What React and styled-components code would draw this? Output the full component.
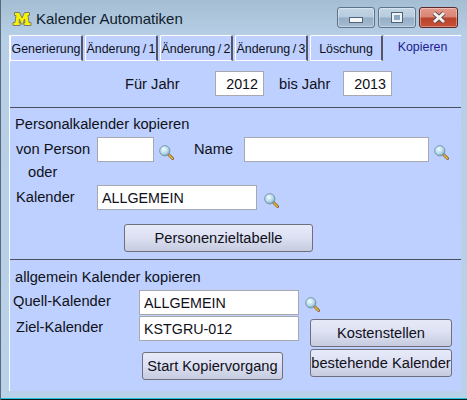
import React from "react";
import styled, { createGlobalStyle } from "styled-components";

const Global = createGlobalStyle`
  html, body {
    margin: 0;
    padding: 0;
    background: #b9d2ea;
  }
  * {
    box-sizing: border-box;
  }
`;

function Lens() {
  return (
    <IconBox>
      <svg width="15" height="15" viewBox="0 0 15 15">
        <defs>
          <radialGradient id="lens" cx="0.4" cy="0.35" r="0.7">
            <stop offset="0" stopColor="#f4fcff" />
            <stop offset="0.6" stopColor="#b4d8e8" />
            <stop offset="1" stopColor="#6c9db6" />
          </radialGradient>
        </defs>
        <path d="M9.5 9.5 L13.6 13.6" stroke="#80601f" strokeWidth="2.8" strokeLinecap="round" />
        <path d="M10 10 L13.4 13.4" stroke="#f0b93a" strokeWidth="1.4" strokeLinecap="round" />
        <circle cx="5.8" cy="5.8" r="5.1" fill="url(#lens)" stroke="#7896a8" strokeWidth="1" />
      </svg>
    </IconBox>
  );
}

function Logo() {
  return (
    <svg width="20" height="14" viewBox="0 0 20 14">
      <path d="M1 13.5 V10.5 H3 L4 3.5 H2.5 V0.5 H7.5 L10 6 L12.5 0.5 H17.5 V3.5 H16 L17 10.5 H19 V13.5 H12 V10.5 H13 L12.6 7 L10.8 12 H9.2 L7.4 7 L7 10.5 H8 V13.5 Z" fill="#f8f400" stroke="#7c7d72" strokeWidth="1" />
    </svg>
  );
}

export default function App() {
  return (
    <>
      <Global />
      <Win>
        <TitleBar>
          <Logo />
          <Title>Kalender Automatiken</Title>
          <Caption>
            <CapButton>
              <MinGlyph />
            </CapButton>
            <CapButton>
              <MaxGlyph />
            </CapButton>
            <CapButton $close>
              <svg width="18" height="13" viewBox="0 0 18 13">
                <path d="M4 2 L14 11 M14 2 L4 11" stroke="#5c4a48" strokeWidth="4.6" />
                <path d="M4 2 L14 11 M14 2 L4 11" stroke="#f4f1ef" strokeWidth="3" />
              </svg>
            </CapButton>
          </Caption>
        </TitleBar>
        <Client>
          <Tabs>
            <Tab>Generierung</Tab>
            <Tab>Änderung / 1</Tab>
            <Tab>Änderung / 2</Tab>
            <Tab>Änderung / 3</Tab>
            <Tab>Löschung</Tab>
            <ActiveTab>Kopieren</ActiveTab>
          </Tabs>
          <YearSection>
            <YearLabel $w={90}>Für Jahr</YearLabel>
            <YearInput readOnly value="2012" />
            <YearLabel $w={64} $left={15}>bis Jahr</YearLabel>
            <YearInput readOnly value="2013" />
          </YearSection>
          <PersonSection>
            <Heading>Personalkalender kopieren</Heading>
            <Row>
              <Label>von Person</Label>
              <Input $w={57} readOnly />
              <Lens />
              <NameLabel>Name</NameLabel>
              <Input $w={185} readOnly />
              <Lens />
            </Row>
            <OrLabel>oder</OrLabel>
            <Row>
              <Label>Kalender</Label>
              <Input $w={160} readOnly value="ALLGEMEIN" />
              <WideLens>
                <Lens />
              </WideLens>
            </Row>
            <TargetButton>Personenzieltabelle</TargetButton>
          </PersonSection>
          <CopySection>
            <Heading>allgemein Kalender kopieren</Heading>
            <CopyGrid>
              <CopyLabel>Quell-Kalender</CopyLabel>
              <SourceCell>
                <Input $w={160} readOnly value="ALLGEMEIN" />
                <SourceLens>
                  <Lens />
                </SourceLens>
              </SourceCell>
              <CopyLabel $indent>Ziel-Kalender</CopyLabel>
              <Input $w={160} readOnly value="KSTGRU-012" />
              <StartButton>Start Kopiervorgang</StartButton>
              <SideButtons>
                <SideButton>Kostenstellen</SideButton>
                <SideButton>bestehende Kalender</SideButton>
              </SideButtons>
            </CopyGrid>
          </CopySection>
        </Client>
        <BottomEdge />
      </Win>
    </>
  );
}

const Win = styled.div`
  width: 467px;
  height: 400px;
  display: flex;
  flex-direction: column;
  overflow: hidden;
  font-family: "Liberation Sans", Arial, sans-serif;
  font-size: 14.67px;
  color: #101018;
  background: linear-gradient(180deg, #a5bdd3 0, #b6cfe6 36px, #b9d2ea 100%);
  border-left: 1px solid #5a6a78;
`;
const TitleBar = styled.div`
  height: 35px;
  flex: none;
  display: flex;
  align-items: center;
  padding: 2px 9px 0 11px;
`;
const Title = styled.div`
  font-size: 15px;
  margin-left: 4px;
  color: #10202c;
`;
const Caption = styled.div`
  margin-left: auto;
  margin-bottom: 3px;
  display: flex;
  gap: 3px;
`;
const CapButton = styled.div`
  width: ${(p) => (p.$close ? 39 : 38)}px;
  height: 21px;
  display: flex;
  align-items: center;
  justify-content: center;
  border: 1px solid ${(p) => (p.$close ? "#5a2a28" : "#5f7488")};
  border-radius: 3px;
  box-shadow: inset 0 0 0 1px rgba(255, 255, 255, 0.35);
  background: ${(p) =>
    p.$close
      ? "linear-gradient(180deg, #e4998c 0, #d98473 48%, #b8412a 52%, #c85238 100%)"
      : "linear-gradient(180deg, #c3d6e6 0, #b6cbdd 48%, #95aec6 52%, #a5bdd2 100%)"};
`;
const MinGlyph = styled.div`
  width: 14px;
  height: 6px;
  margin-top: 5px;
  background: #f4f6f8;
  border: 1px solid #4f6478;
`;
const MaxGlyph = styled.div`
  width: 12px;
  height: 11px;
  background: #8ea8c0;
  border: 3px solid #eef3f7;
  outline: 1px solid #4f6478;
  outline-offset: -1px;
`;
const Client = styled.div`
  flex: none;
  height: 356px;
  margin: 0 6px 0 8px;
  background: #bdd0ff;
  border-left: 1px solid #ffffff;
  display: flex;
  flex-direction: column;
`;
const Tabs = styled.div`
  height: 26px;
  flex: none;
  display: flex;
  gap: 2px;
  background: linear-gradient(180deg, #b6cfe6 0, #b6cfe6 1px, transparent 1px);
`;
const Tab = styled.div`
  width: 73px;
  display: flex;
  align-items: center;
  justify-content: center;
  font-size: 12.4px;
  word-spacing: -1px;
  white-space: nowrap;
  border-top: 1px solid #ffffff;
  border-bottom: 1px solid #ffffff;
  border-left: 1px solid #ffffff;
  border-right: 2px solid #55555f;
  border-top-left-radius: 2px;
  border-top-right-radius: 2px;
  padding-top: 1px;
`;
const ActiveTab = styled.div`
  flex: 1;
  margin-left: -1px;
  padding-top: 4px;
  padding-bottom: 8px;
  text-align: center;
  font-size: 12.4px;
  color: #1c1c8c;
  border-top: 1px solid #ffffff;
`;
const YearSection = styled.div`
  height: 47px;
  flex: none;
  display: flex;
  align-items: center;
  padding: 0 0 1px 115px;
  border-bottom: 1px solid #4c4c5c;
`;
const YearLabel = styled.span`
  width: ${(p) => p.$w}px;
  margin-left: ${(p) => p.$left || 0}px;
`;
const Field = styled.input`
  height: 25px;
  border: 1px solid #a8a8b0;
  background: #ffffff;
  font: inherit;
  font-size: 14.3px;
  color: #101018;
  outline: none;
  padding: 0 4px;
`;
const YearInput = styled(Field)`
  width: 49px;
  text-align: right;
  padding-right: 5px;
`;
const Input = styled(Field)`
  width: ${(p) => p.$w}px;
  flex: none;
`;
const PersonSection = styled.div`
  height: 152px;
  flex: none;
  padding: 7px 0 0 5px;
  border-bottom: 1px solid #4c4c5c;
  display: flex;
  flex-direction: column;
`;
const Heading = styled.div`
  height: 18px;
  line-height: 18px;
`;
const Row = styled.div`
  display: flex;
  align-items: center;
  height: 25px;
  margin-top: 4px;
`;
const Label = styled.div`
  width: 82px;
  flex: none;
  padding-left: 1px;
  margin-bottom: 2px;
`;
const NameLabel = styled.div`
  width: 50px;
  margin-left: 20px;
  margin-bottom: 2px;
`;
const OrLabel = styled.div`
  height: 18px;
  line-height: 18px;
  margin: 1px 0 0 13px;
`;
const IconBox = styled.span`
  width: 20px;
  flex: none;
  display: flex;
  justify-content: flex-end;
  margin-top: 5px;
`;
const WideLens = styled.div`
  margin-left: 2px;
`;
const SourceLens = styled.div`
  margin-left: -3px;
  margin-top: -2px;
`;
const Button = styled.button`
  height: 28px;
  border: 1px solid #70707c;
  border-radius: 3px;
  background: linear-gradient(180deg, #e6eaf8 0, #dde1f3 45%, #c6cbdf 100%);
  font: inherit;
  color: #101018;
  padding: 0;
  white-space: nowrap;
`;
const TargetButton = styled(Button)`
  width: 189px;
  margin: 14px 0 0 109px;
`;
const CopySection = styled.div`
  flex: 1;
  padding: 8px 0 0 5px;
`;
const CopyGrid = styled.div`
  display: grid;
  grid-template-columns: 124px 171px 142px;
  grid-template-rows: 25px 25px 36px;
  row-gap: 1px;
  margin-top: 4px;
`;
const CopyLabel = styled.div`
  margin-left: ${(p) => (p.$indent ? 1 : -2)}px;
  grid-column: 1;
  margin-top: 3px;
`;
const SourceCell = styled.div`
  grid-column: 2 / 4;
  display: flex;
  align-items: center;
  gap: 4px;
`;
const StartButton = styled(Button)`
  grid-column: 1 / 3;
  justify-self: end;
  width: 141px;
  margin: 10px 27px 0 0;
`;
const SideButtons = styled.div`
  grid-column: 3;
  grid-row: 2 / 4;
  display: flex;
  flex-direction: column;
  gap: 2px;
  padding-top: 3px;
`;
const SideButton = styled(Button)`
  width: 142px;
`;
const BottomEdge = styled.div`
  margin-top: auto;
  height: 2px;
  flex: none;
  background: #1fc4d2;
  border-bottom: 1px solid #101820;
`;
